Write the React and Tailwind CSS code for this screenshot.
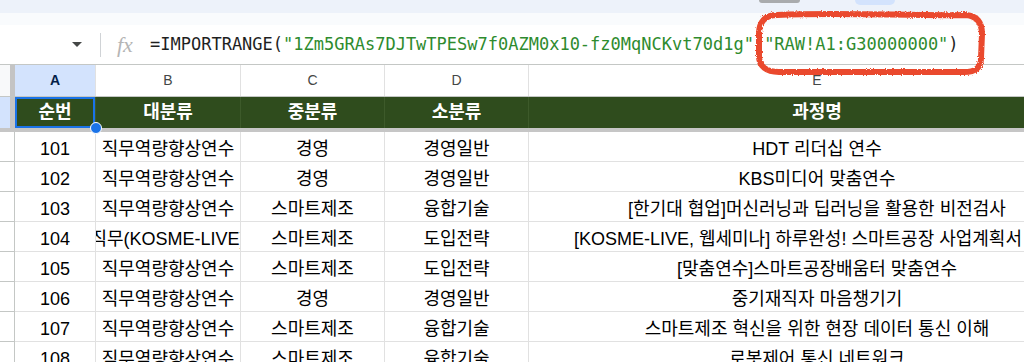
import React from "react";

const rows = [
    ["101", "직무역량향상연수", "경영", "경영일반", "HDT 리더십 연수"],
    ["102", "직무역량향상연수", "경영", "경영일반", "KBS미디어 맞춤연수"],
    ["103", "직무역량향상연수", "스마트제조", "융합기술", "[한기대 협업]머신러닝과 딥러닝을 활용한 비전검사"],
    ["104", "직무(KOSME-LIVE)", "스마트제조", "도입전략", "[KOSME-LIVE, 웹세미나] 하루완성! 스마트공장 사업계획서 작성"],
    ["105", "직무역량향상연수", "스마트제조", "도입전략", "[맞춤연수]스마트공장배움터 맞춤연수"],
    ["106", "직무역량향상연수", "경영", "경영일반", "중기재직자 마음챙기기"],
    ["107", "직무역량향상연수", "스마트제조", "융합기술", "스마트제조 혁신을 위한 현장 데이터 통신 이해"],
    ["108", "직무역량향상연수", "스마트제조", "융합기술", "로봇제어 통신 네트워크"],
];

const widths = ["w-[81px]", "w-[145px]", "w-[144px]", "w-[144px]", "w-[577px]"];
const letters = ["A", "B", "C", "D", "E"];
const heads = ["순번", "대분류", "중분류", "소분류", "과정명"];

const App = () => {
    return (
        <div className="relative w-[1024px] h-[362px] overflow-hidden bg-white text-[#1f1f1f] font-['Liberation_Sans','Noto_Sans_CJK_KR',sans-serif]">
            {/* toolbar edge */}
            <div className="h-[13px] bg-[#edf2fa] flex items-start pl-[759px]">
                <div className="w-[41px] h-[3px] bg-[#a9abad] rounded-b-sm" />
                <div className="ml-[55px] w-[40px] h-[5px] bg-[#d3e3fd] rounded-b-md" />
            </div>
            <div className="h-[12px] bg-[#f9fbfd]" />

            {/* formula bar */}
            <div className="h-[40px] flex items-center border-b border-[#c4c7c5]">
                <div className="w-[100px] flex justify-end pr-[18px]">
                    <svg width="10" height="5" viewBox="0 0 10 5">
                        <path d="M0 0h10L5 5z" fill="#444746" />
                    </svg>
                </div>
                <div className="w-px h-[24px] bg-[#d0d3d6]" />
                <span className="ml-[16px] w-[33px] italic text-[22px] leading-none text-[#b5b5b5] font-['Liberation_Serif',serif]">
                    fx
                </span>
                <div className="whitespace-nowrap text-[17px] font-['DejaVu_Sans_Mono',monospace]">
                    <span>=IMPORTRANGE(</span>
                    <span className="text-[#2e8b2e]">"1Zm5GRAs7DJTwTPESw7f0AZM0x10-fz0MqNCKvt70d1g"</span>
                    <span>,</span>
                    <span className="text-[#2e8b2e]">"RAW!A1:G30000000"</span>
                    <span>)</span>
                </div>
            </div>

            {/* column letters */}
            <div className="flex h-[32px] border-b border-[#c4c7c5]">
                <div className="flex w-[15px] shrink-0">
                    <div className="w-[10px] bg-[#f8f9fa]" />
                    <div className="w-[5px] bg-[#c4c4c4]" />
                </div>
                {letters.map((l, i) => (
                    <div
                        key={l}
                        className={`${widths[i]} shrink-0 flex items-center justify-center border-r border-[#e1e1e1] text-[14px] ${
                            i === 0 ? "bg-[#d3e3fd] font-bold text-[#041e49]" : "text-[#444746]"
                        }`}
                    >
                        {l}
                    </div>
                ))}
            </div>

            {/* header row */}
            <div className="flex h-[31px]">
                <div className="flex w-[15px] shrink-0">
                    <div className="w-[10px] bg-[#d3e3fd]" />
                    <div className="w-[5px] bg-[#c4c4c4]" />
                </div>
                {heads.map((h, i) => (
                    <div
                        key={h}
                        className={`${widths[i]} shrink-0 flex items-center justify-center bg-[#2f4c1d] border-r border-[#3d5a2a] text-white font-bold text-[18px] ${
                            i === 0 ? "shadow-[inset_0_0_0_2px_#1a73e8]" : ""
                        }`}
                    >
                        {h}
                    </div>
                ))}
            </div>
            <div className="h-[4px] bg-[#c6c6c6]" />

            {/* data rows */}
            {rows.map((r) => (
                <div key={r[0]} className="flex h-[30px]">
                    <div className="w-[15px] shrink-0 border-r border-b border-[#c4c7c5]" />
                    {r.map((c, i) => (
                        <div
                            key={i}
                            className={`${widths[i]} shrink-0 flex items-center justify-center pt-[5px] overflow-hidden border-r border-b border-[#e1e1e1] text-[18px] text-black`}
                        >
                            <span className="shrink-0 whitespace-nowrap">{c}</span>
                        </div>
                    ))}
                </div>
            ))}

            {/* fill handle */}
            <div className="absolute left-[90px] top-[122px] w-[12px] h-[12px] rounded-full bg-[#1a73e8] border border-white" />

            {/* red hand-drawn mark */}
            <svg className="absolute left-0 top-0 pointer-events-none" width="1024" height="362">
                <defs>
                    <filter id="rough" x="-5%" y="-20%" width="110%" height="140%">
                        <feTurbulence type="fractalNoise" baseFrequency="0.8" numOctaves="2" seed="4" result="noise" />
                        <feDisplacementMap in="SourceGraphic" in2="noise" scale="3" />
                    </filter>
                </defs>
                <path
                    d="M777 15 C 840 12, 910 16, 966 15 C 978 16, 982 24, 982 34 L 981 58 C 981 68, 975 72, 964 72 L 779 72 C 766 72, 759 66, 759 56 L 759 34 C 759 22, 765 15, 777 15 Z"
                    fill="none"
                    stroke="#ea4a2d"
                    strokeWidth="6"
                    filter="url(#rough)"
                />
            </svg>
        </div>
    );
};

export default App;
